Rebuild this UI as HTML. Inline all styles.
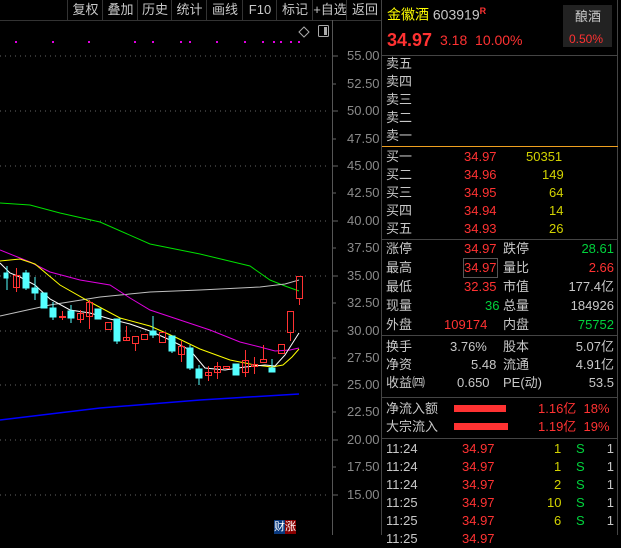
<!DOCTYPE html><html><head><meta charset="utf-8"><style>
body{margin:0;width:621px;height:535px;background:#000;overflow:hidden;position:relative;font-family:"Liberation Sans","Noto Sans CJK SC",sans-serif;}
.a{position:absolute;white-space:nowrap;line-height:1;}
.tb{position:absolute;top:0;height:20px;border-left:1px solid #333;color:#c8c8c8;font-size:13px;line-height:20px;text-align:center}
.ax{position:absolute;left:347px;color:#8a8a8a;font-size:13px;line-height:1}
.w{color:#c8c8c8}.r{color:#ff3232}.g{color:#00d23c}.y{color:#d2d200}
.row{position:absolute;left:386px;width:230px;height:18px;font-size:13px;line-height:18px}
.row span{position:absolute;white-space:nowrap}
.sep{position:absolute;left:382px;width:236px;height:1px;background:#444}
</style></head><body>
<div class="tb" style="left:67px;width:35px">复权</div>
<div class="tb" style="left:102px;width:35px">叠加</div>
<div class="tb" style="left:137px;width:34px">历史</div>
<div class="tb" style="left:171px;width:35px">统计</div>
<div class="tb" style="left:206px;width:36px">画线</div>
<div class="tb" style="left:242px;width:34px">F10</div>
<div class="tb" style="left:276px;width:36px">标记</div>
<div class="tb" style="left:312px;width:34px">+自选</div>
<div class="tb" style="left:346px;width:36px">返回</div>
<div style="position:absolute;left:0;top:20px;width:382px;height:1px;background:#333"></div>
<div style="position:absolute;left:332px;top:20px;width:1px;height:515px;background:#555"></div>
<div style="position:absolute;left:381px;top:0;width:1px;height:535px;background:#444"></div>
<div style="position:absolute;left:617px;top:0;width:1px;height:535px;background:#444"></div>
<svg width="382" height="535" style="position:absolute;left:0;top:0">
<g stroke="#666" stroke-dasharray="1,4">
<line x1="0" y1="56" x2="330" y2="56"/><line x1="0" y1="111" x2="330" y2="111"/><line x1="0" y1="166" x2="330" y2="166"/><line x1="0" y1="221" x2="330" y2="221"/><line x1="0" y1="276" x2="330" y2="276"/><line x1="0" y1="331" x2="330" y2="331"/><line x1="0" y1="385" x2="330" y2="385"/><line x1="0" y1="440" x2="330" y2="440"/><line x1="0" y1="495" x2="330" y2="495"/></g>
<g stroke="#666"><line x1="333" y1="56" x2="338" y2="56"/><line x1="333" y1="84" x2="336" y2="84"/><line x1="333" y1="111" x2="338" y2="111"/><line x1="333" y1="139" x2="336" y2="139"/><line x1="333" y1="166" x2="338" y2="166"/><line x1="333" y1="193" x2="336" y2="193"/><line x1="333" y1="221" x2="338" y2="221"/><line x1="333" y1="248" x2="336" y2="248"/><line x1="333" y1="276" x2="338" y2="276"/><line x1="333" y1="303" x2="336" y2="303"/><line x1="333" y1="331" x2="338" y2="331"/><line x1="333" y1="358" x2="336" y2="358"/><line x1="333" y1="385" x2="338" y2="385"/><line x1="333" y1="412" x2="336" y2="412"/><line x1="333" y1="440" x2="338" y2="440"/><line x1="333" y1="467" x2="336" y2="467"/><line x1="333" y1="495" x2="338" y2="495"/></g>
<g fill="#e000e0"><rect x="15" y="41" width="2" height="2"/><rect x="52" y="41" width="2" height="2"/><rect x="88" y="41" width="2" height="2"/><rect x="134" y="41" width="2" height="2"/><rect x="152" y="41" width="2" height="2"/><rect x="180" y="41" width="2" height="2"/><rect x="189" y="41" width="2" height="2"/><rect x="216" y="41" width="2" height="2"/><rect x="244" y="41" width="2" height="2"/><rect x="262" y="41" width="2" height="2"/><rect x="273" y="41" width="2" height="2"/><rect x="280" y="41" width="2" height="2"/><rect x="290" y="41" width="2" height="2"/><rect x="298" y="41" width="2" height="2"/></g>
<path d="M299 32 l5 -5 l5 5 l-5 5z" fill="none" stroke="#aaa"/>
<rect x="318.5" y="25.5" width="10" height="11" fill="none" stroke="#aaa" rx="1"/><rect x="324" y="27" width="3" height="8" fill="#aaa"/>
<polyline fill="none" stroke="#00e000" points="0,203 30,205 60,213 100,222 150,244 200,254 250,266 270,280 285,286 299,291"/>
<polyline fill="none" stroke="#c0c0c0" points="0,316 50,305 100,297 150,292 200,290 260,287 285,284 299,280"/>
<polyline fill="none" stroke="#e000e0" points="0,250 30,262 50,272 80,280 110,285 130,298 150,310 180,320 210,330 240,342 260,347 275,351 290,350 299,348"/>
<polyline fill="none" stroke="#ffff00" points="0,261 20,259 35,264 60,285 90,302 120,318 150,326 175,337 200,349 230,360 255,365 272,367 283,365 292,357 299,349"/>
<polyline fill="none" stroke="#ffffff" points="0,263 10,273 20,277 35,285 50,299 70,310 90,313 110,319 130,324 150,331 170,340 190,350 205,368 225,370 245,367 265,365 275,366 285,355 292,344 299,333"/>
<polyline fill="none" stroke="#0000ff" stroke-width="1.5" points="0,420 100,408 200,400 299,394"/>
<g fill="#54ffff" stroke="#54ffff">
<rect x="4" y="273" width="4" height="5"/><line x1="7" y1="266" x2="7" y2="290"/>
<rect x="23" y="273" width="6" height="15"/><line x1="26" y1="270" x2="26" y2="290"/>
<rect x="32" y="288" width="6" height="5"/><line x1="35" y1="277" x2="35" y2="300"/>
<rect x="41" y="293" width="6" height="15"/><rect x="50" y="308" width="6" height="9"/><line x1="53" y1="302" x2="53" y2="320"/>
<rect x="68" y="311" width="6" height="7"/><line x1="71" y1="305" x2="71" y2="323"/>
<rect x="95" y="309" width="6" height="10"/>
<rect x="114" y="319" width="6" height="22"/><line x1="117" y1="319" x2="117" y2="344"/>
<rect x="150" y="331" width="6" height="4"/><line x1="153" y1="316" x2="153" y2="338"/>
<rect x="169" y="336" width="6" height="15"/><line x1="172" y1="336" x2="172" y2="353"/>
<rect x="187" y="348" width="6" height="20"/><line x1="190" y1="345" x2="190" y2="370"/>
<rect x="196" y="369" width="6" height="9"/><line x1="199" y1="365" x2="199" y2="385"/>
<rect x="233" y="364" width="6" height="11"/><rect x="269" y="368" width="6" height="4"/><line x1="272" y1="359" x2="272" y2="372"/></g>
<g fill="none" stroke="#ff3232">
<rect x="13.5" y="275.5" width="6" height="12"/><line x1="16.5" y1="268" x2="16.5" y2="292"/>
<rect x="59.5" y="316.5" width="6" height="1"/><line x1="62.5" y1="311" x2="62.5" y2="320"/>
<rect x="77.5" y="313.5" width="6" height="6"/><line x1="80.5" y1="310" x2="80.5" y2="323"/>
<rect x="86.5" y="302.5" width="6" height="14"/><line x1="89.5" y1="300" x2="89.5" y2="329"/>
<rect x="105.5" y="322.5" width="6" height="7"/><rect x="123.5" y="337.5" width="6" height="3"/><line x1="126.5" y1="326" x2="126.5" y2="340"/>
<rect x="132.5" y="336.5" width="6" height="7"/><line x1="135.5" y1="343" x2="135.5" y2="351"/>
<rect x="141.5" y="334.5" width="6" height="5"/>
<rect x="159.5" y="332.5" width="6" height="10"/>
<rect x="178.5" y="346.5" width="6" height="8"/><line x1="181.5" y1="341" x2="181.5" y2="362"/>
<rect x="205.5" y="372.5" width="6" height="3"/><line x1="208.5" y1="366" x2="208.5" y2="381"/>
<rect x="214.5" y="366.5" width="6" height="6"/><line x1="217.5" y1="362" x2="217.5" y2="379"/>
<rect x="223.5" y="366.5" width="6" height="2"/>
<rect x="242.5" y="360.5" width="6" height="12"/><line x1="245.5" y1="350" x2="245.5" y2="377"/>
<rect x="251.5" y="364.5" width="6" height="2"/><line x1="254.5" y1="357" x2="254.5" y2="374"/>
<rect x="260.5" y="359.5" width="6" height="3"/><line x1="263.5" y1="345" x2="263.5" y2="359"/>
<rect x="278.5" y="344.5" width="6" height="9"/>
<rect x="287.5" y="311.5" width="6" height="21"/><line x1="290.5" y1="332" x2="290.5" y2="341"/>
<rect x="296.5" y="276.5" width="6" height="22"/><line x1="299.5" y1="298" x2="299.5" y2="305"/></g>
</svg>
<div class="ax" style="top:49px">55.00</div><div class="ax" style="top:77px">52.50</div><div class="ax" style="top:104px">50.00</div><div class="ax" style="top:132px">47.50</div><div class="ax" style="top:159px">45.00</div><div class="ax" style="top:186px">42.50</div><div class="ax" style="top:214px">40.00</div><div class="ax" style="top:241px">37.50</div><div class="ax" style="top:269px">35.00</div><div class="ax" style="top:296px">32.50</div><div class="ax" style="top:324px">30.00</div><div class="ax" style="top:351px">27.50</div><div class="ax" style="top:378px">25.00</div><div class="ax" style="top:405px">22.50</div><div class="ax" style="top:433px">20.00</div><div class="ax" style="top:460px">17.50</div><div class="ax" style="top:488px">15.00</div>
<div class="a" style="left:274px;top:520px;width:11px;height:14px;background:#0a3a80;color:#fff;font-size:11px;line-height:14px">财</div>
<div class="a" style="left:285px;top:520px;width:11px;height:14px;background:#8a0000;color:#fff;font-size:11px;line-height:14px">涨</div>
<div class="a" style="left:387px;top:7px;font-size:14px;color:#ffff00">金徽酒 <span style="color:#c8c8c8">603919</span><sup style="color:#ff3232;font-size:9px;font-weight:bold">R</sup></div>
<div class="a r" style="left:387px;top:31px;font-size:18px;font-weight:bold">34.97</div>
<div class="a r" style="left:440px;top:33px;font-size:14px">3.18&nbsp;&nbsp;10.00%</div>
<div style="position:absolute;left:563px;top:5px;width:49px;height:42px;background:#222"></div>
<div class="a w" style="left:575px;top:10px;font-size:13px">酿酒</div>
<div class="a r" style="left:569px;top:33px;font-size:12px">0.50%</div>
<div class="sep" style="top:55px"></div>
<div class="row w" style="top:55px">卖五</div><div class="row w" style="top:73px">卖四</div><div class="row w" style="top:91px">卖三</div><div class="row w" style="top:109px">卖二</div><div class="row w" style="top:127px">卖一</div>
<div class="sep" style="top:146px;background:#f0a020"></div>
<div class="row w" style="top:148px">买一<span class="r" style="left:78px">34.97</span><span class="y" style="left:140px">50351</span></div>
<div class="row w" style="top:166px">买二<span class="r" style="left:78px">34.96</span><span class="y" style="left:156px">149</span></div>
<div class="row w" style="top:184px">买三<span class="r" style="left:78px">34.95</span><span class="y" style="left:163px">64</span></div>
<div class="row w" style="top:202px">买四<span class="r" style="left:78px">34.94</span><span class="y" style="left:163px">14</span></div>
<div class="row w" style="top:220px">买五<span class="r" style="left:78px">34.93</span><span class="y" style="left:163px">26</span></div>
<div class="sep" style="top:239px"></div>
<div class="row w" style="top:240px">涨停<span class="r" style="left:78px">34.97</span><span style="left:117px">跌停</span><span class="g" style="right:2px">28.61</span></div>
<div class="row w" style="top:259px">最高<span class="r" style="left:78px;outline:1px solid #555;outline-offset:0">34.97</span><span style="left:117px">量比</span><span class="r" style="right:2px">2.66</span></div>
<div class="row w" style="top:278px">最低<span class="r" style="left:78px">32.35</span><span style="left:117px">市值</span><span style="right:2px">177.4亿</span></div>
<div class="row w" style="top:297px">现量<span class="g" style="left:99px">36</span><span style="left:117px">总量</span><span style="right:2px">184926</span></div>
<div class="row w" style="top:316px">外盘<span class="r" style="left:58px">109174</span><span style="left:117px">内盘</span><span class="g" style="right:2px">75752</span></div>
<div class="sep" style="top:335px"></div>
<div class="row w" style="top:338px">换手<span style="left:64px">3.76%</span><span style="left:117px">股本</span><span style="right:2px">5.07亿</span></div>
<div class="row w" style="top:356px">净资<span style="left:85px">5.48</span><span style="left:117px">流通</span><span style="right:2px">4.91亿</span></div>
<div class="row w" style="top:374px">收益㈣<span style="left:71px">0.650</span><span style="left:117px">PE(动)</span><span style="right:2px">53.5</span></div>
<div class="sep" style="top:397px"></div>
<div class="row w" style="top:400px">净流入额<span style="left:68px;top:5px;width:52px;height:7px;background:#ff3232"></span><span class="r" style="left:152px">1.16亿&nbsp;&nbsp;18%</span></div>
<div class="row w" style="top:418px">大宗流入<span style="left:68px;top:5px;width:54px;height:7px;background:#ff3232"></span><span class="r" style="left:152px">1.19亿&nbsp;&nbsp;19%</span></div>
<div class="sep" style="top:438px"></div>
<div class="row w" style="top:440px">11:24<span class="r" style="left:76px">34.97</span><span class="y" style="left:168px">1</span><span class="g" style="left:190px">S</span><span style="right:2px">1</span></div>
<div class="row w" style="top:458px">11:24<span class="r" style="left:76px">34.97</span><span class="y" style="left:168px">1</span><span class="g" style="left:190px">S</span><span style="right:2px">1</span></div>
<div class="row w" style="top:476px">11:24<span class="r" style="left:76px">34.97</span><span class="y" style="left:168px">2</span><span class="g" style="left:190px">S</span><span style="right:2px">1</span></div>
<div class="row w" style="top:494px">11:25<span class="r" style="left:76px">34.97</span><span class="y" style="left:161px">10</span><span class="g" style="left:190px">S</span><span style="right:2px">1</span></div>
<div class="row w" style="top:512px">11:25<span class="r" style="left:76px">34.97</span><span class="y" style="left:168px">6</span><span class="g" style="left:190px">S</span><span style="right:2px">1</span></div>
<div class="row w" style="top:530px">11:25<span class="r" style="left:76px">34.97</span></div>
</body></html>
